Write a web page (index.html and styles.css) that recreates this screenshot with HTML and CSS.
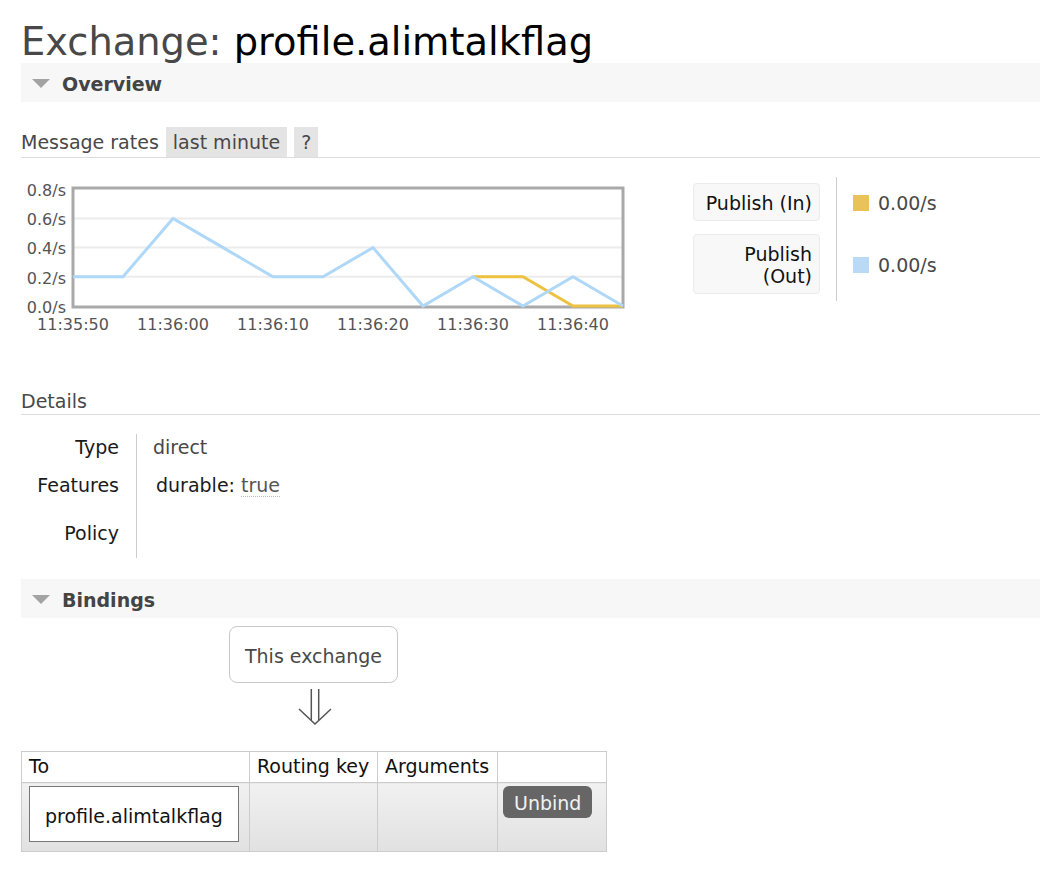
FILE: index.html
```html
<!DOCTYPE html>
<html lang="en">
<head>
<meta charset="utf-8">
<title>Exchange: profile.alimtalkflag</title>
<link rel="stylesheet" href="styles.css">
</head>
<body>
<div class="page">
  <h1 class="title"><span class="kind">Exchange:</span> <span class="name">profile.alimtalkflag</span></h1>

  <section class="section">
    <div class="section-bar"><span class="tri"></span><span class="section-title">Overview</span></div>

    <div class="rates-head">
      <span class="rates-label">Message rates</span>
      <span class="tag">last minute</span>
      <span class="tag">?</span>
    </div>

    <div class="rates-body">
      <svg class="chart" viewBox="21 170 615 165" xmlns="http://www.w3.org/2000/svg">
        <g class="grid">
          <line x1="73" y1="276.8" x2="623" y2="276.8"/>
          <line x1="73" y1="247.6" x2="623" y2="247.6"/>
          <line x1="73" y1="218.4" x2="623" y2="218.4"/>
        </g>
        <rect class="frame" x="73" y="188" width="550" height="119"/>
        <polyline class="s-in" points="473,276.8 523,276.8 573,306 623,306"/>
        <polyline class="s-out" points="73,276.8 123,276.8 173,218.4 223,247.6 273,276.8 323,276.8 373,247.6 423,306 473,276.8 523,306 573,276.8 623,306"/>
        <g class="ylab">
          <text x="66" y="196.2">0.8/s</text>
          <text x="66" y="225.2">0.6/s</text>
          <text x="66" y="254.4">0.4/s</text>
          <text x="66" y="283.6">0.2/s</text>
          <text x="66" y="312.6">0.0/s</text>
        </g>
        <g class="xlab">
          <text x="73" y="330">11:35:50</text>
          <text x="173" y="330">11:36:00</text>
          <text x="273" y="330">11:36:10</text>
          <text x="373" y="330">11:36:20</text>
          <text x="473" y="330">11:36:30</text>
          <text x="573" y="330">11:36:40</text>
        </g>
      </svg>

      <table class="legend">
        <tr>
          <td class="lab"><div class="lbox nowrap">Publish (In)</div></td>
          <td class="val"><div class="v"><span class="swatch sw-in"></span>0.00/s</div></td>
        </tr>
        <tr>
          <td class="lab"><div class="lbox">Publish (Out)</div></td>
          <td class="val"><div class="v"><span class="swatch sw-out"></span>0.00/s</div></td>
        </tr>
      </table>
    </div>

    <h3 class="sub">Details</h3>
    <table class="facts">
      <tr><th>Type</th><td class="dim">direct</td></tr>
      <tr class="tall"><th>Features</th><td><span class="feat">durable: <span class="acr">true</span></span></td></tr>
      <tr><th>Policy</th><td></td></tr>
    </table>
  </section>

  <section class="section bindings">
    <div class="section-bar"><span class="tri"></span><span class="section-title">Bindings</span></div>

    <div class="diagram">
      <div class="node">This exchange</div>
      <svg class="arrow" viewBox="0 0 36 36" xmlns="http://www.w3.org/2000/svg">
        <line x1="14.3" y1="0" x2="14.3" y2="31"/>
        <line x1="21.7" y1="0" x2="21.7" y2="31"/>
        <polyline points="2,20 18,35 34,20"/>
      </svg>
    </div>

    <table class="list">
      <colgroup>
        <col class="c-to"><col class="c-key"><col class="c-args"><col class="c-act">
      </colgroup>
      <thead>
        <tr><th>To</th><th>Routing key</th><th>Arguments</th><th></th></tr>
      </thead>
      <tbody>
        <tr>
          <td><span class="target">profile.alimtalkflag</span></td>
          <td></td>
          <td></td>
          <td class="act"><span class="btn">Unbind</span></td>
        </tr>
      </tbody>
    </table>
  </section>
</div>
</body>
</html>
```

FILE: styles.css
```css
* { box-sizing: border-box; }

body {
  margin: 0;
  background: #fff;
  color: #484848;
  font-family: "DejaVu Sans", Verdana, sans-serif;
  font-size: 19px;
  line-height: 24px;
}

.page { padding-left: 21px; }

.title {
  margin: 20px 0 0;
  font-size: 38.4px;
  line-height: 43px;
  font-weight: normal;
  color: #484848;
}
.title .name { color: #000; }

.section-bar {
  height: 39px;
  background: #f7f7f7;
  display: flex;
  align-items: center;
  padding-left: 11px;
  padding-top: 2px;
}
.tri {
  width: 0;
  height: 0;
  border-left: 9px solid transparent;
  border-right: 9px solid transparent;
  border-top: 9px solid #a3a3a3;
  margin-right: 12px;
  margin-top: -1px;
}
.section-title { font-weight: bold; color: #444; }

.rates-head {
  margin-top: 25px;
  display: flex;
  gap: 7px;
  line-height: 29px;
  border-bottom: 1px solid #ddd;
}
.rates-head span { padding-top: 1px; }
.tag {
  background: #e4e4e4;
  padding: 0 7px;
}

.rates-body {
  display: flex;
  align-items: flex-start;
  margin-top: 12px;
}
.chart {
  display: block;
  width: 615px;
  height: 165px;
}
.chart .grid line { stroke: #ececec; stroke-width: 2; }
.chart .frame { fill: none; stroke: #a9a9a9; stroke-width: 3; }
.chart polyline { fill: none; stroke-width: 3; stroke-linejoin: miter; }
.chart .s-in { stroke: #edc240; }
.chart .s-out { stroke: #afd8f8; }
.chart text {
  font-family: "DejaVu Sans", Verdana, sans-serif;
  font-size: 16px;
  fill: #545454;
}
.chart .ylab text { text-anchor: end; }
.chart .xlab text { text-anchor: middle; }

.legend {
  margin: 7px 0 0 57px;
  border-collapse: collapse;
}
.legend td { padding: 6px 0 7px; }
.legend .lab { padding-right: 16px; vertical-align: top; }
.legend .val {
  padding-left: 16px;
  border-left: 1px solid #ccc;
  vertical-align: middle;
}
.lbox {
  width: 127px;
  background: #f8f8f8;
  border: 1px solid #ebebeb;
  border-radius: 4px;
  padding: 8px 7px 6px;
  text-align: right;
  line-height: 22px;
  color: #111;
}
.nowrap { white-space: nowrap; }
.v { display: flex; align-items: center; white-space: nowrap; padding-top: 1px; }
.swatch {
  display: inline-block;
  width: 16px;
  height: 16px;
  margin-right: 9px;
}
.sw-in { background: #e9c35a; }
.sw-out { background: #b9d9f5; }

.sub {
  margin: 53px 0 0;
  font-size: 19px;
  font-weight: normal;
  line-height: 24px;
  padding: 1px 0 1px;
  border-bottom: 1px solid #ddd;
}

.facts {
  margin-top: 19px;
  border-spacing: 0;
}
.facts th {
  width: 115px;
  text-align: right;
  font-weight: normal;
  color: #1a1a1a;
  padding: 1px 17px 13px 0;
  vertical-align: top;
}
.facts td {
  padding: 1px 16px 13px;
  border-left: 1px solid #ccc;
  vertical-align: top;
}
.facts .tall th,
.facts .tall td { padding-bottom: 23px; }
.facts .dim { color: #484848; }
.feat { padding-left: 3px; color: #1a1a1a; }
.acr { color: #555; border-bottom: 1px dotted #bbb; }

.bindings { margin-top: 21px; }

.diagram {
  width: 585px;
  padding-top: 8px;
  text-align: center;
}
.node {
  display: inline-block;
  border: 1px solid #c8c8c8;
  border-radius: 8px;
  padding: 17px 15px 14px;
  line-height: 24px;
}
.arrow {
  display: block;
  width: 36px;
  height: 36px;
  margin: 6px auto 0;
  transform: translateX(1px);
}
.arrow line,
.arrow polyline {
  fill: none;
  stroke: #555;
  stroke-width: 1.5;
}

.list {
  margin-top: 26px;
  width: 585px;
  table-layout: fixed;
  border-collapse: collapse;
}
.c-to { width: 228px; }
.c-key { width: 128px; }
.c-args { width: 120px; }
.c-act { width: 109px; }
.list th,
.list td {
  border: 1px solid #ccc;
  text-align: left;
  font-weight: normal;
  color: #111;
  line-height: 24px;
}
.list th { padding: 2px 7px 4px; background: #fff; }
.list td {
  padding: 3px 7px 9px;
  vertical-align: top;
  background: linear-gradient(#f1f1f1, #e1e1e1);
}
.list td.act { padding-left: 5px; }
.target {
  display: inline-block;
  background: #fff;
  border: 1px solid #777;
  padding: 17px 15px 13px;
  line-height: 24px;
}
.btn {
  display: inline-block;
  background: #666;
  color: #f2f2f2;
  border-radius: 6px;
  padding: 5px 11px 3px;
  line-height: 24px;
}
```
